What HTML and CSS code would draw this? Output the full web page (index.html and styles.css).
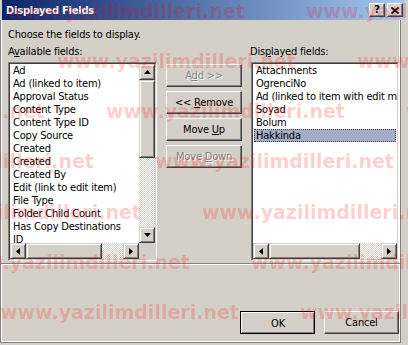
FILE: index.html
```html
<!DOCTYPE html>
<html lang="en">
<head>
    <meta charset="UTF-8">
    <title>Displayed Fields</title>
    <link rel="stylesheet" href="styles.css">
</head>
<body>

<div class="window">
    <div class="titlebar">
        <span class="title">Displayed Fields</span>
        <div class="caption-buttons">
            <span class="cap-btn help">?</span>
            <span class="cap-btn">
                <svg width="8" height="7" viewBox="0 0 8 7"><path d="M0.5 0.5 L7.5 6.5 M7.5 0.5 L0.5 6.5" stroke="#000" stroke-width="1.6" fill="none"/></svg>
            </span>
        </div>
    </div>

    <div class="client">
        <p class="intro">Choose the fields to display.</p>

        <div class="columns">
            <div class="col col-left">
                <label class="field-label">A<u>v</u>ailable fields:</label>
                <div class="listbox">
                    <div class="listbox-inner with-vscroll">
                        <ul class="items">
                            <li>Ad</li>
                            <li>Ad (linked to item)</li>
                            <li>Approval Status</li>
                            <li>Content Type</li>
                            <li>Content Type ID</li>
                            <li>Copy Source</li>
                            <li>Created</li>
                            <li>Created</li>
                            <li>Created By</li>
                            <li>Edit (link to edit item)</li>
                            <li>File Type</li>
                            <li>Folder Child Count</li>
                            <li>Has Copy Destinations</li>
                            <li>ID</li>
                        </ul>
                        <div class="vscroll">
                            <span class="sb-btn"><svg width="7" height="4"><path d="M3.5 0 L7 4 L0 4 Z"/></svg></span>
                            <span class="sb-thumb v-thumb-left"></span>
                            <span class="sb-track"></span>
                            <span class="sb-btn"><svg width="7" height="4"><path d="M0 0 L7 0 L3.5 4 Z"/></svg></span>
                        </div>
                        <div class="hscroll">
                            <span class="sb-btn"><svg width="4" height="7"><path d="M0 3.5 L4 0 L4 7 Z"/></svg></span>
                            <span class="sb-thumb h-thumb-left"></span>
                            <span class="sb-track"></span>
                            <span class="sb-btn"><svg width="4" height="7"><path d="M0 0 L4 3.5 L0 7 Z"/></svg></span>
                        </div>
                        <div class="corner"></div>
                    </div>
                </div>
            </div>

            <div class="col-mid">
                <button class="btn" disabled>A<u>d</u>d &gt;&gt;</button>
                <button class="btn">&lt;&lt; <u>R</u>emove</button>
                <button class="btn">Move <u>U</u>p</button>
                <button class="btn" disabled>Move <u>D</u>own</button>
            </div>

            <div class="col col-right">
                <label class="field-label">Dis<u>p</u>layed fields:</label>
                <div class="listbox">
                    <div class="listbox-inner">
                        <ul class="items">
                            <li>Attachments</li>
                            <li>OgrenciNo</li>
                            <li>Ad (linked to item with edit menu)</li>
                            <li>Soyad</li>
                            <li>Bolum</li>
                            <li class="selected">Hakkinda</li>
                        </ul>
                        <div class="hscroll">
                            <span class="sb-btn"><svg width="4" height="7"><path d="M0 3.5 L4 0 L4 7 Z"/></svg></span>
                            <span class="sb-thumb h-thumb-right"></span>
                            <span class="sb-track"></span>
                            <span class="sb-btn"><svg width="4" height="7"><path d="M0 0 L4 3.5 L0 7 Z"/></svg></span>
                        </div>
                    </div>
                </div>
            </div>
        </div>

        <div class="separator"></div>

        <div class="footer">
            <button class="btn btn-default">OK</button>
            <button class="btn">Cancel</button>
        </div>
    </div>

    <div class="watermark">
        <div class="wm-row" style="top: 0px; left: -294px;"><span>www.yazilimdilleri.net</span><span>www.yazilimdilleri.net</span><span>www.yazilimdilleri.net</span></div>
        <div class="wm-row" style="top: 50px; left: -243px;"><span>www.yazilimdilleri.net</span><span>www.yazilimdilleri.net</span><span>www.yazilimdilleri.net</span></div>
        <div class="wm-row" style="top: 100px; left: -194px;"><span>www.yazilimdilleri.net</span><span>www.yazilimdilleri.net</span><span>www.yazilimdilleri.net</span></div>
        <div class="wm-row" style="top: 150px; left: -145px;"><span>www.yazilimdilleri.net</span><span>www.yazilimdilleri.net</span><span>www.yazilimdilleri.net</span></div>
        <div class="wm-row" style="top: 201px; left: -98px;"><span>www.yazilimdilleri.net</span><span>www.yazilimdilleri.net</span><span>www.yazilimdilleri.net</span></div>
        <div class="wm-row" style="top: 251px; left: -49px;"><span>www.yazilimdilleri.net</span><span>www.yazilimdilleri.net</span><span>www.yazilimdilleri.net</span></div>
        <div class="wm-row" style="top: 301px; left: 0px;"><span>www.yazilimdilleri.net</span><span>www.yazilimdilleri.net</span><span>www.yazilimdilleri.net</span></div>
    </div>
</div>

</body>
</html>
```

FILE: styles.css
```css
body {
    margin: 0;
    font-family: "DejaVu Sans Condensed", "DejaVu Sans", sans-serif;
    font-stretch: condensed;
    font-size: 11px;
    letter-spacing: -0.2px;
    color: #000;
}
.window {
    position: relative;
    width: 408px;
    height: 345px;
    overflow: hidden;
    background-color: #D4D0C8;
}
.titlebar {
    display: flex;
    align-items: center;
    justify-content: space-between;
    height: 20px;
    margin: 0 3px 0 2px;
    padding: 0 2px 0 4px;
    background: linear-gradient(to right, #0A246A, #A6CAF0);
    color: #fff;
}
.title {
    font-weight: bold;
    padding-top: 1px;
}
.caption-buttons {
    display: flex;
    gap: 2px;
}
.cap-btn {
    display: flex;
    align-items: center;
    justify-content: center;
    width: 16px;
    height: 14px;
    box-sizing: border-box;
    background-color: #D4D0C8;
    border: 1px solid;
    border-color: #fff #404040 #404040 #fff;
    box-shadow: inset -1px -1px #808080;
    color: #000;
}
.cap-btn.help {
    font-family: "DejaVu Sans", sans-serif;
    font-weight: bold;
    font-size: 11px;
    line-height: 12px;
}
.client {
    width: 401px;
    height: 323px;
    box-sizing: border-box;
    padding: 8px 1px 0 7px;
    border-left: 1px solid #808080;
    border-right: 1px solid #808080;
    border-bottom: 1px solid #808080;
    box-shadow: inset 1px 0 #fff, inset -1px 0 #fff, inset 0 -1px #fff;
}
.intro {
    margin: 0;
    line-height: 13px;
}
.columns {
    display: flex;
    align-items: flex-start;
    margin-top: 4px;
}
.col {
    display: flex;
    flex-direction: column;
}
.col-left {
    width: 149px;
}
.col-right {
    width: 148px;
}
.field-label {
    line-height: 13px;
    margin-bottom: 4px;
}
.col-right .field-label {
    margin-left: -1px;
}
.col-mid {
    display: flex;
    flex-direction: column;
    gap: 4px;
    width: 76px;
    margin: 19px 9px 0 9px;
}
.btn {
    height: 23px;
    box-sizing: border-box;
    padding: 0;
    background-color: #D4D0C8;
    border: 1px solid;
    border-color: #fff #404040 #404040 #fff;
    box-shadow: inset -1px -1px #808080, inset 1px 1px #D4D0C8;
    font: inherit;
    letter-spacing: inherit;
    color: #000;
}
.btn:disabled {
    color: #808080;
    text-shadow: 1px 1px #fff;
}
.btn-default {
    outline: 1px solid #000;
    outline-offset: -1px;
    border-width: 2px 1px 1px 2px;
}
.listbox {
    height: 199px;
    box-sizing: border-box;
    border: 1px solid;
    border-color: #808080 #fff #fff #808080;
}
.listbox-inner {
    display: grid;
    grid-template-columns: 1fr;
    grid-template-rows: 1fr 16px;
    height: 100%;
    box-sizing: border-box;
    border: 1px solid;
    border-color: #404040 #D4D0C8 #D4D0C8 #404040;
    background-color: #fff;
}
.listbox-inner.with-vscroll {
    grid-template-columns: 1fr 16px;
}
.items {
    list-style: none;
    margin: 0;
    padding: 0 1px;
    overflow: hidden;
    min-width: 0;
}
.items li {
    height: 13px;
    line-height: 13px;
    padding-left: 2px;
    white-space: nowrap;
}
.items li.selected {
    background-color: #A3AEC8;
    outline: 1px dotted #404040;
    outline-offset: -1px;
}
.vscroll {
    display: flex;
    flex-direction: column;
}
.hscroll {
    display: flex;
    grid-column: 1;
}
.sb-btn,
.sb-thumb {
    display: flex;
    align-items: center;
    justify-content: center;
    flex: none;
    width: 16px;
    height: 16px;
    box-sizing: border-box;
    background-color: #D4D0C8;
    border: 1px solid;
    border-color: #D4D0C8 #404040 #404040 #D4D0C8;
    box-shadow: inset 1px 1px #fff, inset -1px -1px #808080;
}
.sb-btn svg {
    fill: #000;
}
.sb-track {
    flex: 1;
    background-color: #D4D0C8;
    background-image: conic-gradient(#fff 25%, #D4D0C8 0 50%, #fff 0 75%, #D4D0C8 0);
    background-size: 2px 2px;
}
.v-thumb-left {
    height: 78px;
}
.h-thumb-left {
    width: 76px;
}
.h-thumb-right {
    width: 91px;
}
.corner {
    background-color: #D4D0C8;
}
.separator {
    margin: 2px -1px 0 -7px;
    border-top: 1px solid #808080;
    border-bottom: 1px solid #fff;
}
.footer {
    display: flex;
    justify-content: flex-end;
    gap: 9px;
    margin-top: 46px;
}
.footer .btn {
    width: 75px;
}
.watermark {
    position: absolute;
    top: 0;
    left: 0;
    right: 0;
    bottom: 0;
    pointer-events: none;
    font-family: "DejaVu Sans", sans-serif;
    font-stretch: normal;
    font-weight: bold;
    font-size: 19px;
    line-height: 22px;
    letter-spacing: 0;
    color: rgba(255, 0, 0, 0.2);
}
.wm-row {
    position: absolute;
    white-space: nowrap;
}
.wm-row span {
    display: inline-block;
    width: 300px;
}
```
